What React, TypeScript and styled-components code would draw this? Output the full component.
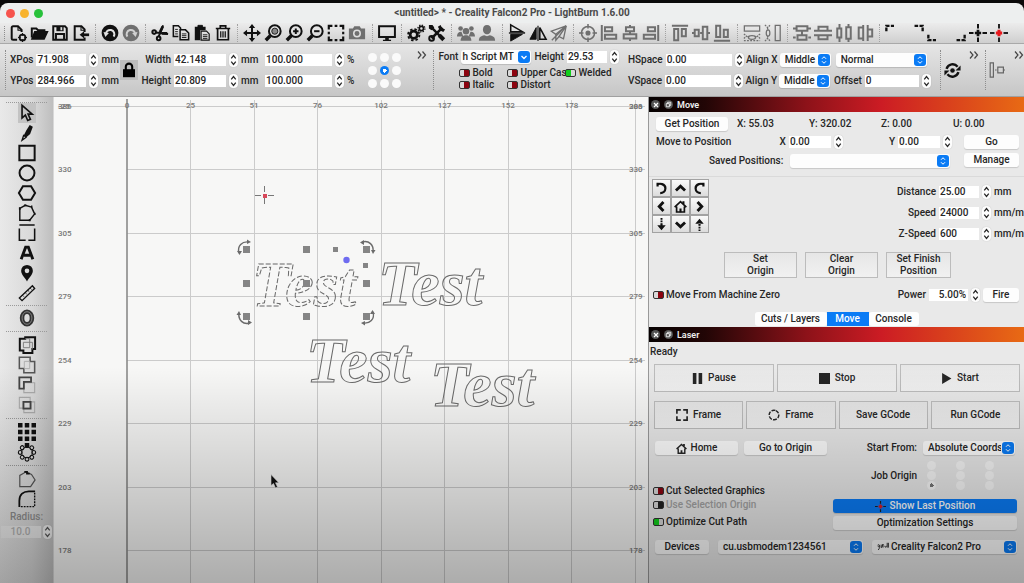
import React from "react";
import styled, { createGlobalStyle, css } from "styled-components";

const Global = createGlobalStyle`
  * { box-sizing: border-box; }
  html, body, #root { height: 100%; }
  body { margin: 0; background: #000; overflow: hidden; }
  body, button, input, select {
    font-family: Roboto, "Liberation Sans", sans-serif;
    font-size: 10px;
    font-weight: 500;
    line-height: 12px;
    color: #262626;
  }
  button, input, select { margin: 0; padding: 0; border: 0; }
`;

/* ---------- window frame ---------- */

const Window = styled.div`
  height: 100vh;
  padding-top: 3px;
  display: flex;
  flex-direction: column;
  background: #0a0a0a;
`;

const TitleBar = styled.header`
  display: grid;
  grid-template-columns: 1fr auto 1fr;
  align-items: center;
  height: 20px;
  flex: none;
  padding: 0 6px;
  background: #edefef;
  border-radius: 8px 8px 0 0;
`;

const Lights = styled.div`
  display: flex;
  gap: 5px;
`;

const Light = styled.span<{ $color: string }>`
  width: 9px;
  height: 9px;
  border-radius: 50%;
  background: ${(p) => p.$color};
`;

const Title = styled.h1`
  margin: 0;
  font-size: 10px;
  font-weight: 700;
  line-height: 12px;
  color: #4a4a4a;
`;

const Shade = styled.div`
  position: absolute;
  left: 0;
  right: 0;
  bottom: 0;
  height: 37vh;
  pointer-events: none;
  background: linear-gradient(rgba(0, 0, 0, 0), rgba(0, 0, 0, 0.3));
`;

/* ---------- icons ---------- */

const icons: Record<string, React.ReactNode> = {
  newFile: (
    <g>
      <path d="M9 17.5H4.5A1.5 1.5 0 0 1 3 16V4a1.5 1.5 0 0 1 1.500-1.500H10l4 4V9" />
      <path d="M10 3v4h4" strokeWidth="1.200" />
      <circle cx="15" cy="15" r="3.300" strokeWidth="2" />
      <path d="M15 10v3M15 17v3M10 15h3M17 15h3" strokeWidth="1.200" />
    </g>
  ),
  open: (
    <g>
      <path d="M2 15V5h5l2 2h7v2" />
      <path d="M2.500 16.500 5.500 9H19l-3.500 7.500z" fill="currentColor" />
    </g>
  ),
  save: (
    <g>
      <path d="M2.500 2.500h13l2 2v13h-15z" />
      <path d="M6 2.500h8v5.500H6z" fill="currentColor" stroke="none" />
      <path d="M10.500 3.500h2v3.500h-2z" fill="#ddd" stroke="none" />
      <path d="M5.500 17v-6h9v6" />
    </g>
  ),
  exportFile: (
    <g>
      <path d="M14 15v2.500H3v-15h7.500L14 6v3" />
      <path d="M10 3v4h4" strokeWidth="1.200" />
      <path d="M19 12h-6" strokeWidth="3" />
      <path d="M8.500 12l5-4v8z" fill="currentColor" stroke="none" />
    </g>
  ),
  undo: (
    <g>
      <circle cx="10" cy="10" r="9.300" fill="currentColor" stroke="none" />
      <path d="M5.500 12a4.700 4.700 0 1 1 8.500 2" stroke="#e2e2e2" strokeWidth="2.200" />
      <path d="M2.800 9l6 1-4 4.500z" fill="#e2e2e2" stroke="none" />
    </g>
  ),
  redo: (
    <g>
      <circle cx="10" cy="10" r="9.300" fill="currentColor" stroke="none" />
      <path d="M14.500 12A4.700 4.700 0 1 0 6 14" stroke="#cfcfcf" strokeWidth="2.200" />
      <path d="M17.200 9l-6 1 4 4.500z" fill="#cfcfcf" stroke="none" />
    </g>
  ),
  cut: (
    <g>
      <circle cx="3.500" cy="9" r="2" />
      <circle cx="8.500" cy="16" r="2" />
      <path d="M5.500 9.500 19 11M8.500 14 13.500 1.500" />
      <path d="M10 9l3-6M12 10.500h6" strokeWidth="3" />
    </g>
  ),
  copy: (
    <g strokeWidth="1.700">
      <path d="M7 14H1.500V2H7l2.500 2.500V6" />
      <path d="M9 6.500h6l3.500 3.500v7.500H9z" />
      <path d="M3.500 6h3M3.500 8.500h3M3.500 11h3M11 11h5M11 13h5M11 15h5" strokeWidth="1" />
    </g>
  ),
  paste: (
    <g>
      <path d="M2 3h12v4H8v11H2z" fill="currentColor" stroke="none" />
      <path d="M5.500 1.500h5v3h-5z" fill="currentColor" strokeWidth="1" />
      <path d="M9 8h6l3 3v7H9z" strokeWidth="1.300" />
      <path d="M11 12h5M11 14h5M11 16h5" strokeWidth="1" />
    </g>
  ),
  trash: (
    <g strokeWidth="1.900">
      <path d="M2 5h16M7 5V2h6v3M4 5v12.500h12V5" />
      <path d="M7.500 8v7M10 8v7M12.500 8v7" strokeWidth="1.400" />
    </g>
  ),
  move: (
    <g>
      <path d="M10 3v14M3 10h14" />
      <path d="M10 0l3.500 4.500h-7zM10 20l3.500-4.500h-7zM0 10l4.500-3.500v7zM20 10l-4.500-3.500v7z" fill="currentColor" stroke="none" />
    </g>
  ),
  zoomPage: (
    <g>
      <circle cx="12" cy="8" r="6.500" />
      <circle cx="12" cy="8" r="3.400" fill="#888" strokeWidth="1" />
      <path d="M7 13l-5 5" strokeWidth="3.800" />
    </g>
  ),
  zoomIn: (
    <g>
      <circle cx="12" cy="8" r="6.500" />
      <path d="M12 5v6M9 8h6M7 13l-1 1" />
      <path d="M7 13l-5 5" strokeWidth="3.800" />
    </g>
  ),
  zoomOut: (
    <g>
      <circle cx="12" cy="8" r="6.500" />
      <path d="M9 8h6" />
      <path d="M7 13l-5 5" strokeWidth="3.800" />
    </g>
  ),
  marquee: <path d="M2 6V2h4M8.500 2h3M14 2h4v4M18 8.500v3M18 14v4h-4M11.500 18h-3M6 18H2v-4M2 11.500v-3" strokeWidth="2.400" />,
  camera: (
    <g>
      <path d="M1 5h4.500L7 2.500h6L14.500 5H19v12H1z" fill="currentColor" stroke="none" />
      <circle cx="10" cy="10.500" r="3.600" stroke="#ddd" strokeWidth="1.700" />
    </g>
  ),
  monitor: (
    <g>
      <path d="M1.200 2.500h17.600v12H1.200z" />
      <path d="M8 15h4v2.500h2.500V19h-9v-1.500H8z" fill="currentColor" stroke="none" />
    </g>
  ),
  gears: (
    <g>
      <circle cx="7.500" cy="12" r="4" strokeWidth="3" />
      <circle cx="7.500" cy="12" r="6.300" strokeWidth="2" strokeDasharray="2.700 2.248" />
      <circle cx="16" cy="5" r="2.300" strokeWidth="1.800" />
      <circle cx="16" cy="5" r="3.900" strokeWidth="1.400" strokeDasharray="1.500 1.563" />
    </g>
  ),
  tools: (
    <g>
      <path d="M4 16 16 4" strokeWidth="3" />
      <path d="M3 3l14 14" strokeWidth="2.600" />
      <path d="M12.500 12.500l5 5" strokeWidth="4.500" />
      <path d="M1 5V1h4l2 3-3 3zM14 1l1.500 3.500L19 6l-2 3-4-2-2-4z" fill="currentColor" stroke="none" />
      <circle cx="4" cy="16" r="2.600" />
    </g>
  ),
  users: (
    <g fill="currentColor" stroke="none">
      <circle cx="4" cy="5" r="2.600" />
      <circle cx="16" cy="5" r="2.600" />
      <circle cx="10" cy="8" r="3.600" />
      <path d="M0 14c0-4 2-5.500 5-5.500l2 5.500zM20 14c0-4-2-5.500-5-5.500L13 14zM4 18.500c0-4 3-6 6-6s6 2 6 6z" />
    </g>
  ),
  user: (
    <g fill="currentColor" stroke="none">
      <path d="M10 1c3 0 4.500 2 4.500 5S12.500 11.500 10 11.500 5.500 9 5.500 6 7 1 10 1z" />
      <path d="M1 18.500c0-4 2-5 6-6l3 1 3-1c4 1 6 2 6 6z" />
    </g>
  ),
  flipV: (
    <g>
      <path d="M3 1l13 7.500H3z" strokeWidth="1.700" />
      <path d="M3 19l13-7.500H3z" fill="currentColor" strokeWidth="1" />
      <path d="M1 10h18" strokeWidth="1.500" />
    </g>
  ),
  flipH: (
    <g>
      <path d="M8 4v13H1z" fill="currentColor" strokeWidth="1" />
      <path d="M12 4v13h7z" strokeWidth="1.700" />
      <path d="M10 2v17" strokeWidth="1.300" />
    </g>
  ),
  mirror: (
    <g strokeWidth="1.500">
      <path d="M18 2 1.500 8l5 3.500zM18 2l-3 14.500-5-2.500z" />
      <path d="M2 18 18 2M6.500 11.500V18l3.500-4" />
    </g>
  ),
  target: (
    <g strokeWidth="1.700">
      <circle cx="10" cy="10" r="7.300" />
      <circle cx="10" cy="10" r="2" fill="currentColor" />
      <path d="M10 0v5M10 15v5M0 10h5M15 10h5" />
    </g>
  ),
  alignL: <path d="M2 1v18M5.500 3.500h8v4.500h-8zM5.500 12h12.500v4.500H5.500z" />,
  alignC: <path d="M10 1v2M10 8v3M10 16v3M5.500 3.500h9V8h-9zM3 11.500h14V16H3z" />,
  alignR: <path d="M18 1v18M6.500 3.500h8v4.500h-8zM2 12h12.500v4.500H2z" />,
  alignT: <path d="M1 2h18M3.500 5.500h4.500V18H3.500zM12 5.500h4.500v8H12z" />,
  alignM: <path d="M0 10h2M9 10h3M18 10h2M3 6.500h4.500v7H3zM12 3h5v14h-5z" />,
  alignB: <path d="M1 18.500h18M3.500 2h4.500v12.500H3.500zM12 6.500h4.500v8H12z" />,
  sameW: (
    <g strokeWidth="1.400">
      <path d="M1.500 2h17v6h-17z" />
      <path d="M1 11l3 2.500L1 16M19 11l-3 2.500 3 2.500M5 14h2M13 14h2" strokeDasharray="2 1" />
      <ellipse cx="10" cy="15" rx="4" ry="2" />
      <path d="M1 18.500h18" strokeDasharray="2 1.500" />
    </g>
  ),
  sameH: (
    <g strokeWidth="1.400">
      <path d="M12.500 1.500H18v17h-5.500z" />
      <path d="M1 1l3 3 3-3M1 19l3-3 3 3M4 4v3M4 13v3" strokeDasharray="2 1" />
      <ellipse cx="4.500" cy="10" rx="2" ry="3.500" />
    </g>
  ),
  distV: <path d="M0 5h3M17 5h3M0 15h3M17 15h3M10 8v4M4 2.500h12v5H4zM5 12.500h10v5H5z" />,
  spaceV: <path d="M0 7.500h20M0 12.500h20M5 7V3h10v4M5 13v4h10v-4" />,
  distH: <path d="M5 0v4M5 16v4M15 0v3M15 17v3M2.500 5h4.500v10H2.500zM12.500 3.500h5v13h-5z" />,
  spaceH: <path d="M8 1v18M13 1v18M7 4H3v12h4M13 6h5v8h-5" />,
  cornerTL: <path d="M1.500 8V2H10" strokeDasharray="4 1.500" strokeWidth="2.600" />,
  cornerTR: <path d="M18.500 8V2H9" strokeDasharray="4 1.500" strokeWidth="2.600" />,
  cornerBL: <path d="M1.500 12v6H10" strokeDasharray="4 1.500" strokeWidth="2.600" />,
  cornerBR: <path d="M18.500 12v6H9" strokeDasharray="4 1.500" strokeWidth="2.600" />,
  cross: (
    <g>
      <path d="M10 0v5M10 15v5M0 10h5M15 10h5" />
      <path d="M10 6.500v7M6.500 10h7" strokeWidth="3" />
    </g>
  ),
  crossRed: (
    <g>
      <path d="M10 0v5M10 15v5M0 10h5M15 10h5" stroke="#222" />
      <path d="M10 6.500v7M6.500 10h7" strokeWidth="3.400" stroke="#e8171b" />
    </g>
  ),
  select: <path d="M4.500 1.500v14l3.700-3.200 2.600 6 3-1.300-2.600-5.800h4.600z" strokeWidth="1.800" />,
  pencil: (
    <g>
      <path d="M9 7.500 13 1l3.500 2-3 8-4.500 4-3-1.500z" fill="currentColor" stroke="none" />
      <path d="M6.500 12 4.500 18l5-3.500" strokeWidth="1.500" />
    </g>
  ),
  rect: <path d="M1.500 2h17v16h-17z" strokeWidth="2.200" />,
  circle: <circle cx="10" cy="10" r="8.300" strokeWidth="2.200" />,
  hexagon: <path d="M5.500 2.500h9L19 10l-4.500 7.500h-9L1 10z" />,
  polygon: (
    <g strokeWidth="1.600">
      <path d="M2 18V5l6-3.500 7 2L18.500 11 13 18z" />
      <path d="M1 5h2M8 .5v2M14.500 3h1.500M18 11h1.500M12 18h2" strokeWidth="2.600" />
    </g>
  ),
  dashedBox: <path d="M1.500 1h17M1.500 5v13h7M11.500 18h7V5" strokeWidth="1.700" />,
  textA: <path d="M3.500 17 8.500 3.500h3l5 13.500M6.500 12.500h7" strokeWidth="3.200" />,
  pin: <path fillRule="evenodd" d="M10 1a6.500 6.500 0 0 1 6.500 6.500C16.500 12 12 15 10 19.500 8 15 3.500 12 3.500 7.500A6.500 6.500 0 0 1 10 1zm0 4a2.600 2.600 0 1 0 0 5.200A2.600 2.600 0 0 0 10 5z" fill="currentColor" stroke="none" />,
  ruler: (
    <g strokeWidth="1.500">
      <path d="M1.500 15.500 16 2l2.500 3L4.500 18.500z" />
      <path d="M5 12.500l1.500 1.500M8 9.500l1.500 1.500M11 7l1.500 1.500M13.500 4.500 15 6" strokeWidth="1" />
    </g>
  ),
  ring: (
    <g>
      <ellipse cx="10" cy="10" rx="5.500" ry="7" strokeWidth="5" stroke="#333" />
      <ellipse cx="10" cy="10" rx="5.500" ry="7" strokeWidth="1" stroke="#888" />
    </g>
  ),
  weld: (
    <g>
      <path d="M2 3h6V1.500h11v13h-3V19H6v-3H2z" />
      <path d="M8 3h5v10H6V7h10v8" strokeWidth="1" stroke="#777" />
    </g>
  ),
  union: (
    <g strokeWidth="1.700">
      <path d="M1.500 1.500h12V6h5v12.500h-12V14h-5z" stroke="#555" />
      <path d="M7 6h6v8H7z" stroke="#aaa" strokeWidth="1" />
    </g>
  ),
  subtract: (
    <g>
      <path d="M6.500 7.500H18.500v11h-12z" stroke="#aaa" strokeWidth="1.300" />
      <path d="M1.500 1.500h13v5h-8V14h-5z" stroke="#444" strokeWidth="2" />
    </g>
  ),
  intersect: (
    <g>
      <path d="M1.500 1.500h12v12h-12zM6.500 6.500h12v12h-12z" stroke="#aaa" strokeWidth="1.200" />
      <path d="M6 6.500h8V14H6z" stroke="#444" strokeWidth="2" />
    </g>
  ),
  gridArray: (
    <path d="M0 0h5v5H0zM7.500 0h5v5h-5zM15 0h5v5h-5zM0 7.500h5v5H0zM7.500 7.500h5v5h-5zM15 7.500h5v5h-5zM0 15h5v5H0zM7.500 15h5v5h-5zM15 15h5v5h-5z" fill="currentColor" stroke="none" />
  ),
  radialArray: (
    <g strokeWidth="1.200">
      <circle cx="10" cy="3" r="1.900" fill="currentColor" />
      {[45, 90, 135, 180, 225, 270, 315].map((a) => (
        <circle key={a} cx="10" cy="3" r="2.100" transform={`rotate(${a} 10 10.500)`} />
      ))}
      <circle cx="10" cy="10.500" r="6" strokeWidth="1" />
      <path d="M7.500 0h5v5h-5z" fill="currentColor" stroke="none" />
    </g>
  ),
  tabs: (
    <g>
      <path d="M2 18.500V6l7-4 6 3 4 6-5 7.500z" strokeWidth="1.300" stroke="#555" />
      <path d="M7 1h4v2h2v2H9V3H7z" fill="currentColor" stroke="none" />
    </g>
  ),
  fillet: (
    <g>
      <path d="M1.500 19V12C1.500 5 6 1.500 12 1.500h7" strokeWidth="2" />
      <path d="M18.500 3v15.500H2" strokeWidth="1.500" strokeDasharray="2 1.200" />
    </g>
  ),
  lock: (
    <g>
      <path d="M2.500 9h15v10h-15z" fill="currentColor" stroke="none" />
      <path d="M6 10V6a4 4 0 0 1 8 0v4" strokeWidth="2.600" />
    </g>
  ),
  refresh: (
    <g>
      <path d="M3 8a7.500 7.500 0 0 1 13-2.500M17 12a7.500 7.500 0 0 1-13 2.500" strokeWidth="2.800" />
      <path d="M19.500 4v6h-6zM.5 16v-6h6z" fill="currentColor" stroke="none" />
      <circle cx="10" cy="10" r="2.700" fill="currentColor" stroke="none" />
    </g>
  ),
  attach: (
    <g strokeWidth="1.500" stroke="#666">
      <path d="M1.500 1h4v18h-4zM11 6.500h7v7h-7z" />
      <path d="M7.500 10h2M18 10h2" />
    </g>
  ),
  turnL: <path d="M3 4.500C7 1 16 3 16 9.500c0 5-4 7.500-8 7.500M4 1v6" strokeWidth="3.400" />,
  turnR: <path d="M17 4.500C13 1 4 3 4 9.500c0 5 4 7.500 8 7.500M16 1v6" strokeWidth="3.400" />,
  up: <path d="M3 13l7-6.500 7 6.500" strokeWidth="4.400" />,
  down: <path d="M3 7l7 6.500L17 7" strokeWidth="4.400" />,
  left: <path d="M13 3l-6.500 7 6.500 7" strokeWidth="4.400" />,
  right: <path d="M7 3l6.500 7L7 17" strokeWidth="4.400" />,
  home: (
    <g>
      <path d="M1 11 10 2.500 19 11M4 10v8.500h12V10" strokeWidth="2.600" />
      <path d="M14.500 2v4M10 19v-6" strokeWidth="3.200" />
    </g>
  ),
  zDown: (
    <g>
      <path d="M10 0v10" strokeWidth="3" strokeDasharray="2.500 1.500" />
      <path d="M3.500 11h13L10 19zM8.500 9h3v3h-3z" fill="currentColor" stroke="none" />
    </g>
  ),
  zUp: (
    <g>
      <path d="M10 20V10" strokeWidth="3" strokeDasharray="2.500 1.500" />
      <path d="M3.500 9h13L10 1zM8.500 8h3v3h-3z" fill="currentColor" stroke="none" />
    </g>
  ),
  pause: <path d="M1.500 0H8v20H1.500zM12 0h6.500v20H12z" fill="currentColor" stroke="none" />,
  stop: <path d="M0 0h20v20H0z" fill="currentColor" stroke="none" />,
  play: <path d="M2 0l17 10L2 20z" fill="currentColor" stroke="none" />,
  frameSq: <path d="M1.500 8V1.500H8M12 1.500h6.500V8M18.500 12v6.500H12M8 18.500H1.500V12" strokeWidth="2.800" />,
  frameO: <circle cx="10" cy="10" r="8" strokeWidth="2.400" strokeDasharray="6.300 2.078" transform="rotate(-68 10 10)" />,
  chevrons: <path d="M2 3l6 7-6 7M11 3l6 7-6 7" strokeWidth="2.400" />,
  updown: <path d="M6 7.500 10 3.500l4 4M6 12.500l4 4 4-4" strokeWidth="2" />,
  dropdown: <path d="M5 8l5 5 5-5" strokeWidth="2.600" />,
  close: <path d="M5 5l10 10M15 5 5 15" strokeWidth="3" />,
  float: <path d="M5 8h7v7H5zM8 8V5h7v7h-3" strokeWidth="1.800" />,
  scribble: <path d="M1 7c2-2 4 0 3 2s-3 0-1-1 2 4-1 7M7 6v5c2 0 2-4 3-6M10 5v6M13 8c0 3 2 3 3 0M17 3v8M19 3v8" strokeWidth="1.600" />,
  stepUp: <path d="M5 14l5-6 5 6" strokeWidth="2.800" />,
  stepDown: <path d="M5 6l5 6 5-6" strokeWidth="2.800" />,
};

const Glyph = styled.svg<{ $size: number }>`
  display: block;
  flex: none;
  width: ${(p) => p.$size}px;
  height: ${(p) => p.$size}px;
  fill: none;
  stroke: currentColor;
  stroke-width: 2.2px;
  overflow: visible;
`;

const Icon = ({ name, size = 18 }: { name: string; size?: number }) => (
  <Glyph viewBox="0 0 20 20" $size={size} aria-hidden="true">
    {icons[name]}
  </Glyph>
);

/* ---------- main toolbar ---------- */

const Toolbar = styled.div`
  display: flex;
  align-items: center;
  flex: none;
  height: 21px;
  padding: 0 14px 0 4px;
  background: linear-gradient(#ececec, #cfcfcf);
  border-bottom: 1px solid #a9a9a9;
  overflow: hidden;
`;

const Handle = styled.span<{ $tall?: boolean }>`
  flex: none;
  width: 3px;
  height: ${(p) => (p.$tall ? "40px" : "15px")};
  border-left: 1px dotted #8d8d8d;
`;

const Separator = styled.span`
  flex: 1 0 8px;
  max-width: 10px;
  height: 18px;
  display: flex;
  justify-content: center;
  &::before {
    content: "";
    border-left: 1px dotted #a2a2a2;
  }
`;

const ToolButton = styled.button<{ $dim?: boolean; $active?: boolean }>`
  display: flex;
  align-items: center;
  justify-content: center;
  flex: none;
  width: 21px;
  height: 20px;
  background: ${(p) => (p.$active ? "#c3c3c3" : "none")};
  color: ${(p) => (p.$dim ? "#6f6f6f" : "#111")};
`;

const toolGroups: { items: string[]; dim?: string[] }[] = [
  { items: ["newFile", "open", "save", "exportFile"] },
  { items: ["undo", "redo"], dim: ["redo"] },
  { items: ["cut", "copy", "paste", "trash"] },
  { items: ["move", "zoomPage", "zoomIn", "zoomOut", "marquee", "camera"], dim: ["camera"] },
  { items: ["monitor"] },
  { items: ["gears", "tools"] },
  { items: ["users", "user"], dim: ["users", "user"] },
  { items: ["flipV", "flipH", "mirror"], dim: ["mirror"] },
  { items: ["target", "alignL", "alignC", "alignR"], dim: ["target", "alignL", "alignC", "alignR"] },
  { items: ["alignT", "alignM", "alignB"], dim: ["alignT", "alignM", "alignB"] },
  { items: ["sameW", "sameH"], dim: ["sameW", "sameH"] },
  { items: ["distV", "spaceV", "distH", "spaceH"], dim: ["distV", "spaceV", "distH", "spaceH"] },
  { items: ["cornerTL", "cornerTR", "cornerBL", "cornerBR", "cross", "crossRed"] },
];

/* ---------- form parts ---------- */

const Field = styled.input<{ $w: number; $right?: boolean }>`
  width: ${(p) => p.$w}px;
  height: 12px;
  flex: none;
  padding: 0 2px 0 1px;
  background: #fff;
  text-align: ${(p) => (p.$right ? "right" : "left")};
  &:disabled {
    background: #f4f4f4;
    color: #a0a0a0;
    text-align: center;
  }
`;

const StepperBox = styled.span`
  display: flex;
  flex-direction: column;
  flex: none;
  width: 9px;
  height: 14px;
  border-radius: 4px;
  background: #fdfdfd;
  box-shadow: 0 0 1px rgba(0, 0, 0, 0.25);
`;

const StepButton = styled.button`
  display: flex;
  justify-content: center;
  align-items: center;
  width: 9px;
  height: 7px;
  background: none;
`;

const Stepper = ({ label }: { label: string }) => (
  <StepperBox>
    <StepButton aria-label={`Increase ${label}`}><Icon name="stepUp" size={9} /></StepButton>
    <StepButton aria-label={`Decrease ${label}`}><Icon name="stepDown" size={9} /></StepButton>
  </StepperBox>
);

const SpinLabel = styled.label`
  display: flex;
  align-items: center;
  justify-content: flex-end;
  gap: 3px;
  white-space: nowrap;
`;

const Unit = styled.span<{ $w?: number }>`
  width: ${(p) => (p.$w ? `${p.$w}px` : "auto")};
`;

type SpinProps = { label?: string; aria?: string; value: string; w: number; unit?: string; unitW?: number; right?: boolean };

const Spin = ({ label, aria, value, w, unit, unitW, right }: SpinProps) => (
  <SpinLabel>
    {label}
    <Field $w={w} $right={right} defaultValue={value} aria-label={label ?? aria} />
    <Stepper label={label ?? aria ?? ""} />
    {unit && <Unit $w={unitW}>{unit}</Unit>}
  </SpinLabel>
);

const SelectWrap = styled.span<{ $w?: number }>`
  position: relative;
  display: inline-flex;
  flex: ${(p) => (p.$w ? "none" : "1")};
  width: ${(p) => (p.$w ? `${p.$w}px` : "auto")};
  height: 14px;
`;

const NativeSelect = styled.select<{ $pad: number }>`
  appearance: none;
  width: 100%;
  height: 14px;
  padding: 0 14px 0 ${(p) => p.$pad}px;
  border-radius: 3px;
  background: #fdfdfd;
  box-shadow: 0 1px 1px rgba(0, 0, 0, 0.15);
`;

const SelectArrow = styled.span`
  position: absolute;
  right: 1px;
  top: 1px;
  width: 12px;
  height: 12px;
  border-radius: 3px;
  display: flex;
  align-items: center;
  justify-content: center;
  color: #fff;
  background: #0a7bf5;
  pointer-events: none;
`;

type SelectProps = { value: string; w?: number; pad?: number; label: string; icon?: string };

const Select = ({ value, w, pad = 5, label, icon = "updown" }: SelectProps) => (
  <SelectWrap $w={w}>
    <NativeSelect $pad={pad} aria-label={label} defaultValue={value}>
      <option>{value}</option>
    </NativeSelect>
    <SelectArrow><Icon name={icon} size={10} /></SelectArrow>
  </SelectWrap>
);

const Switch = styled.input<{ $off?: string }>`
  appearance: none;
  flex: none;
  width: 11px;
  height: 8px;
  border: 1px solid #333;
  border-radius: 2px;
  background: linear-gradient(90deg, #d9d9d9 45%, ${(p) => p.$off ?? "#8c0410"} 45%);
  &:checked {
    background: linear-gradient(90deg, #12cf1c 55%, #d9d9d9 55%);
  }
`;

const SwitchLabel = styled.label<{ $muted?: boolean }>`
  display: flex;
  align-items: center;
  gap: 2px;
  height: 12px;
  white-space: nowrap;
  ${(p) => p.$muted && css`color: #a4a4a4;`}
`;

const Dots = styled.div<{ $gx: number; $gy: number }>`
  display: grid;
  grid-template-columns: repeat(3, 9px);
  grid-auto-rows: 9px;
  column-gap: ${(p) => p.$gx}px;
  row-gap: ${(p) => p.$gy}px;
`;

const Dot = styled.input<{ $faded?: boolean }>`
  appearance: none;
  width: 9px;
  height: 9px;
  margin: 0;
  border-radius: 50%;
  background: ${(p) => (p.$faded ? "#f6f6f6" : "#fafafa")};
  &:checked {
    ${(p) =>
      p.$faded
        ? css`background: radial-gradient(circle, #777 2px, #f6f6f6 2px);`
        : css`background: radial-gradient(circle, #fff 2px, #0a7bf5 2px);`}
  }
`;

const DotGrid = ({ name, picked, gx, gy, faded }: { name: string; picked: number; gx: number; gy: number; faded?: boolean }) => (
  <Dots $gx={gx} $gy={gy} role="radiogroup" aria-label={name}>
    {Array.from({ length: 9 }, (_, i) => (
      <Dot key={i} type="radio" name={name} aria-label={`${name} ${i + 1}`} defaultChecked={i === picked} $faded={faded} />
    ))}
  </Dots>
);

/* ---------- options bar ---------- */

const OptionsBar = styled.div`
  display: flex;
  align-items: center;
  flex: none;
  height: 53px;
  padding-left: 5px;
  background: linear-gradient(#e6e6e6, #c6c6c6);
  border-bottom: 1px solid #a0a0a0;
  overflow: hidden;
`;

const Stack = styled.div<{ $ml?: number }>`
  display: flex;
  flex-direction: column;
  flex: none;
  gap: 7px;
  margin-left: ${(p) => p.$ml ?? 0}px;
`;

const LockButton = styled.button`
  display: flex;
  align-items: center;
  justify-content: center;
  flex: none;
  width: 18px;
  height: 20px;
  margin-left: 3px;
  background: #bdbdbd;
  color: #000;
`;

const Spacer = styled.div<{ $w: number }>`
  flex: none;
  width: ${(p) => p.$w}px;
`;

const More = styled.button`
  align-self: flex-start;
  flex: none;
  width: 12px;
  height: 12px;
  margin-top: 5px;
  background: none;
  color: #444;
`;

const FontBlock = styled.div`
  display: flex;
  flex-direction: column;
  flex: none;
  gap: 3px;
  margin-left: 2px;
`;

const FontRow = styled.div`
  display: flex;
  align-items: center;
  gap: 3px;
`;

const FontSwitches = styled.div`
  display: grid;
  grid-template-columns: 48px 58px 1fr;
  padding-left: 21px;
`;

const PairRow = styled.div`
  display: flex;
  align-items: center;
  gap: 2px;
  height: 14px;
`;

const Cell = styled.span<{ $w: number }>`
  display: flex;
  justify-content: flex-end;
  flex: none;
  width: ${(p) => p.$w}px;
  white-space: nowrap;
`;

const PlainButton = styled.button`
  flex: none;
  background: none;
  color: #111;
`;

/* ---------- body ---------- */

const Body = styled.div`
  display: flex;
  flex: 1;
  min-height: 0;
`;

const Tools = styled.nav`
  display: flex;
  flex-direction: column;
  align-items: center;
  flex: none;
  width: 54px;
  padding-top: 5px;
  background: linear-gradient(90deg, #e9e9e9, #d9d9d9 60%, #bebebe);
  border-right: 1px solid #d8d8d8;
`;

const Rule = styled.span<{ $m: number }>`
  align-self: stretch;
  flex: none;
  margin: ${(p) => p.$m}px 6px;
  border-top: 1px dotted #9a9a9a;
`;

const SideButton = styled(ToolButton)`
  width: 18px;
`;

const RadiusLabel = styled.label`
  padding-top: 2px;
  color: #909090;
`;

const RadiusRow = styled.div`
  display: flex;
  align-items: center;
  gap: 2px;
  margin-top: 2px;
  opacity: 0.7;
`;

const CanvasArea = styled.main`
  flex: 1;
  min-width: 0;
  background: #f7f7f6;
  border-right: 1px solid #999;
`;

const Drawing = styled.svg`
  display: block;
  width: 100%;
  height: 100%;
`;

const RulerText = styled.text`
  font-family: Roboto, sans-serif;
  font-size: 8px;
  font-weight: 500;
  fill: #777;
`;

const Lettering = styled.text`
  font-family: "Brush Script MT", "Liberation Serif", serif;
  font-size: 64px;
  font-style: italic;
  font-weight: 700;
  fill: none;
  stroke: #6a6a6a;
  stroke-width: 1px;
`;

const columns = [0, 25, 51, 76, 102, 127, 152, 178];
const rows = [330, 305, 279, 254, 229, 203, 178];
const PITCH = 63.5;
const X0 = 73;
const Y0 = 9;

const Corner = ({ x, y, turn }: { x: number; y: number; turn: number }) => (
  <g transform={`translate(${x} ${y}) rotate(${turn})`} stroke="#6b6b6b" fill="none" strokeWidth="1.400">
    <path d="M-7 4C-9-3-4-8 3-7" />
    <path d="M1-9.500 5-7 1-5zM-9 2l2.500 4L-4 2z" fill="#6b6b6b" stroke="none" />
  </g>
);

const handles = [[192, 152], [252, 152], [312, 152], [192, 186], [252, 186], [312, 186], [192, 219], [252, 219], [312, 219]];

const Canvas = () => (
  <CanvasArea>
    <Drawing role="img" aria-label="Work area">
      <g stroke="#cbcbcb" strokeWidth="1">
        <path d={`M6 ${Y0}.5H591`} />
        {rows.map((_, i) => {
          const y = Math.floor(Y0 + (i + 1) * PITCH) + 0.5;
          return <path key={i} d={`M${X0} ${y}H591`} />;
        })}
        {columns.slice(1).map((_, i) => {
          const x = Math.floor(X0 + (i + 1) * PITCH) + 0.5;
          return <path key={i} d={`M${x} 3V1200`} />;
        })}
        <path d="M581.500 3V1200" />
      </g>
      <path d="M73 2V1200" stroke="#8a8a8a" strokeWidth="1.600" />
      {columns.map((c, i) => (
        <RulerText key={c} x={X0 + i * PITCH} y="11" textAnchor="middle">{c}</RulerText>
      ))}
      <RulerText x="4" y="12">386</RulerText>
      <RulerText x="4" y="12">-25</RulerText>
      <RulerText x="575" y="12">386</RulerText>
      <RulerText x="575" y="12">203</RulerText>
      {rows.map((r, i) => (
        <React.Fragment key={r}>
          <RulerText x="4" y={Math.floor(Y0 + (i + 1) * PITCH) + 3}>{r}</RulerText>
          <RulerText x="575" y={Math.floor(Y0 + (i + 1) * PITCH) + 3}>{r}</RulerText>
        </React.Fragment>
      ))}

      <g stroke="#777" strokeWidth="1">
        <path d="M210.500 89v6M210.500 101v6M201 98.500h6M214 98.500h6" />
        <path d="M209 97h4v4h-4z" fill="#d8485a" stroke="none" />
      </g>

      <Lettering x="198" y="209" strokeDasharray="5 2">Test</Lettering>
      <Lettering x="324" y="208">Test</Lettering>
      <Lettering x="252" y="285">Test</Lettering>
      <Lettering x="376" y="309">Test</Lettering>

      {handles.map(([x, y]) => (
        <rect key={`${x}-${y}`} x={x - 3} y={y - 3} width="7" height="7" fill="#858585" />
      ))}
      <rect x="279" y="150" width="5" height="5" fill="#858585" />
      <rect x="309" y="166" width="5" height="5" fill="#858585" />
      <circle cx="292.500" cy="163" r="3.200" fill="#6f6cf0" />
      <Corner x={192} y={152} turn={0} />
      <Corner x={312} y={152} turn={90} />
      <Corner x={312} y={219} turn={180} />
      <Corner x={192} y={219} turn={270} />

      <path d="M217 377.500v11l2.500-2 2 4.500 2-1-2-4.200h3.300z" fill="#111" stroke="#eee" strokeWidth="0.600" />
    </Drawing>
  </CanvasArea>
);

/* ---------- right-hand dock ---------- */

const Dock = styled.aside`
  flex: none;
  width: 375px;
  background: #e9e9e9;
  overflow: hidden;
`;

const DockTitle = styled.h2`
  display: flex;
  align-items: center;
  gap: 4px;
  height: 15px;
  margin: 0;
  padding-left: 2px;
  font-size: 9px;
  font-weight: 600;
  line-height: 12px;
  color: #eee;
  background: linear-gradient(90deg, #050000, #220606 15%, #8d1219 42%, #cc1c24 62%, #e86a14);
`;

const DockButton = styled.button`
  display: flex;
  align-items: center;
  justify-content: center;
  width: 9px;
  height: 9px;
  border-radius: 50%;
  color: #fff;
  background: #555;
`;

const Push = styled.button<{ $w?: number; $primary?: boolean }>`
  display: inline-flex;
  align-items: center;
  justify-content: center;
  gap: 4px;
  flex: none;
  width: ${(p) => (p.$w ? `${p.$w}px` : "100%")};
  height: 14px;
  border-radius: 3px;
  background: ${(p) => (p.$primary ? "#0a7bf5" : "#fdfdfd")};
  color: ${(p) => (p.$primary ? "#fff" : "#262626")};
  box-shadow: 0 1px 1px rgba(0, 0, 0, 0.15);
  white-space: nowrap;
`;

const BevelButton = styled.button<{ $h: number }>`
  display: flex;
  align-items: center;
  justify-content: center;
  gap: 5px;
  height: ${(p) => p.$h}px;
  border: 1px solid #bcbcbc;
  background: linear-gradient(#e6e6e6, #f1f1f1);
`;

const MoveGrid = styled.div`
  display: grid;
  grid-template-columns: 72px 1fr 55px;
  row-gap: 3px;
  column-gap: 9px;
  align-items: center;
  padding: 5px 5px 8px 7px;
  border-bottom: 1px solid #dadada;
`;

const Readouts = styled.div`
  grid-column: 2 / -1;
  display: grid;
  grid-template-columns: repeat(4, 72px);
`;

const MoveTo = styled.div`
  grid-column: 1 / 3;
  display: flex;
  align-items: center;
  justify-content: space-between;
  height: 15px;
  padding-right: 3px;
`;

const XInput = styled.div`
  display: flex;
  flex: 1;
  justify-content: flex-end;
  gap: 46px;
`;

const WideLabel = styled.label`
  display: flex;
  align-items: center;
  gap: 7px;
  width: 241px;
`;

const SavedRow = styled.div`
  grid-column: 1 / 3;
  display: flex;
  justify-content: flex-end;
  padding: 2px 5px 0 0;
`;

const JogRow = styled.div`
  display: flex;
  justify-content: space-between;
  padding: 2px 0 0 3px;
`;

const JogGrid = styled.div`
  display: grid;
  grid-template-columns: repeat(3, 19px);
  grid-auto-rows: 18px;
`;

const JogButton = styled.button`
  display: flex;
  align-items: center;
  justify-content: center;
  border: 1px solid #a2a2a2;
  background: linear-gradient(#fafafa, #dcdcdc);
  color: #111;
`;

const SpeedStack = styled.div`
  display: flex;
  flex-direction: column;
  gap: 7px;
  padding-top: 6px;
`;

const OriginRow = styled.div`
  display: grid;
  grid-template-columns: 73px 73px 65px;
  gap: 8px;
  padding: 11px 0 0 75px;
`;

const PowerRow = styled.div`
  display: flex;
  align-items: center;
  justify-content: space-between;
  padding: 10px 5px 0 4px;
`;

const Inline = styled.div<{ $gap: number }>`
  display: flex;
  align-items: center;
  gap: ${(p) => p.$gap}px;
`;

const Tabs = styled.div`
  display: flex;
  justify-content: center;
  padding: 10px 0 1px;
`;

const Tab = styled.button<{ $active?: boolean; $w: number }>`
  width: ${(p) => p.$w}px;
  height: 14px;
  border-radius: ${(p) => (p.$active ? "0" : "3px")};
  background: ${(p) => (p.$active ? "#0a7bf5" : "#fdfdfd")};
  color: ${(p) => (p.$active ? "#fff" : "#262626")};
`;

const Status = styled.p`
  margin: 0;
  padding: 4px 0 0 1px;
`;

const ButtonRow = styled.div<{ $cols: number; $top: number }>`
  display: grid;
  grid-template-columns: repeat(${(p) => p.$cols}, 1fr);
  gap: 3px;
  padding: ${(p) => p.$top}px 4px 0 5px;
`;

const HomeRow = styled.div`
  display: flex;
  align-items: center;
  gap: 6px;
  padding: 12px 9px 0 6px;
`;

const PushRight = styled.label`
  display: flex;
  align-items: center;
  gap: 6px;
  margin-left: auto;
`;

const JobOriginRow = styled.div`
  display: flex;
  align-items: center;
  justify-content: flex-end;
  gap: 10px;
  padding: 6px 30px 0 0;
`;

const CutRow = styled.div`
  display: grid;
  grid-template-columns: 1fr 184px;
  padding: 0 7px 0 4px;
`;

const CutSwitches = styled.div`
  display: flex;
  flex-direction: column;
  margin-top: -5px;
  gap: 2px;
  & > :last-child { margin-top: 3px; }
`;

const CutButtons = styled.div`
  display: flex;
  flex-direction: column;
  gap: 3px;
  padding-top: 9px;
`;

const DeviceRow = styled.div`
  display: flex;
  align-items: center;
  justify-content: space-between;
  padding: 10px 7px 0 6px;
`;

const DeviceSelect = styled.div`
  position: relative;
  display: flex;
`;

const DeviceMark = styled.span`
  position: absolute;
  left: 5px;
  top: 1px;
  z-index: 1;
`;

const PanelHead = ({ title }: { title: string }) => (
  <DockTitle>
    <DockButton aria-label={`Close ${title}`}><Icon name="close" size={8} /></DockButton>
    <DockButton aria-label={`Float ${title}`}><Icon name="float" size={9} /></DockButton>
    {title}
  </DockTitle>
);

const jogs = ["turnL", "up", "turnR", "left", "home", "right", "zDown", "down", "zUp"];

const sideGroups = [
  ["select", "pencil", "rect", "circle", "hexagon", "polygon", "dashedBox", "textA", "pin", "ruler"],
  ["ring"],
  ["weld", "union", "subtract", "intersect"],
  ["gridArray", "radialArray"],
  ["tabs", "fillet"],
];

export default function App() {
  return (
    <>
      <Global />
      <Window>
        <TitleBar>
          <Lights>
            <Light $color="#f6544d" />
            <Light $color="#f8b32d" />
            <Light $color="#27c13a" />
          </Lights>
          <Title>&lt;untitled&gt; * - Creality Falcon2 Pro - LightBurn 1.6.00</Title>
        </TitleBar>

        <Toolbar>
          <Handle />
          {toolGroups.map((g, i) => (
            <React.Fragment key={i}>
              {i > 0 && <Separator />}
              {g.items.map((n) => (
                <ToolButton key={n} aria-label={n} $dim={g.dim?.includes(n)}>
                  <Icon name={n} />
                </ToolButton>
              ))}
            </React.Fragment>
          ))}
        </Toolbar>

        <OptionsBar>
          <Handle $tall />
          <Stack $ml={2}>
            <Spin label="XPos" value="71.908" w={50} unit="mm" unitW={16} />
            <Spin label="YPos" value="284.966" w={50} unit="mm" unitW={16} />
          </Stack>
          <LockButton aria-label="Lock aspect ratio"><Icon name="lock" size={16} /></LockButton>
          <Stack $ml={3}>
            <Spin label="Width" value="42.148" w={52} unit="mm" unitW={16} />
            <Spin label="Height" value="20.809" w={52} unit="mm" unitW={16} />
          </Stack>
          <Stack $ml={8}>
            <Spin aria="Width percent" value="100.000" w={67} unit="%" />
            <Spin aria="Height percent" value="100.000" w={67} unit="%" />
          </Stack>
          <Spacer $w={14} />
          <DotGrid name="Anchor" picked={4} gx={3} gy={4} />
          <Spacer $w={16} />
          <More aria-label="More position options"><Icon name="chevrons" size={10} /></More>
          <Spacer $w={4} />
          <Handle $tall />
          <FontBlock>
            <FontRow>
              Font
              <Select value="h Script MT" w={70} pad={1} label="Font" icon="dropdown" />
              <Spin label="Height" value="29.53" w={40} />
            </FontRow>
            <FontSwitches>
              <SwitchLabel><Switch type="checkbox" />Bold</SwitchLabel>
              <SwitchLabel><Switch type="checkbox" />Upper Case</SwitchLabel>
              <SwitchLabel><Switch type="checkbox" defaultChecked />Welded</SwitchLabel>
              <SwitchLabel><Switch type="checkbox" />Italic</SwitchLabel>
              <SwitchLabel><Switch type="checkbox" />Distort</SwitchLabel>
            </FontSwitches>
          </FontBlock>
          <Stack $ml={9}>
            <PairRow>
              <Spin label="HSpace" value="0.00" w={66} />
              <Cell $w={32}>Align X</Cell>
              <Select value="Middle" w={51} label="Align X" />
              <Spacer $w={1} />
              <Select value="Normal" w={91} label="Text mode" />
            </PairRow>
            <PairRow>
              <Spin label="VSpace" value="0.00" w={66} />
              <Cell $w={32}>Align Y</Cell>
              <Select value="Middle" w={51} label="Align Y" />
              <Spacer $w={0} />
              <Spin label="Offset" value="0" w={54} />
            </PairRow>
          </Stack>
          <Spacer $w={9} />
          <Handle $tall />
          <Spacer $w={1} />
          <PlainButton aria-label="Refresh"><Icon name="refresh" size={17} /></PlainButton>
          <Spacer $w={8} />
          <More aria-label="More text options"><Icon name="chevrons" size={10} /></More>
          <Spacer $w={4} />
          <Handle $tall />
          <Spacer $w={1} />
          <PlainButton aria-label="Attach"><Icon name="attach" size={16} /></PlainButton>
          <Spacer $w={9} />
          <More aria-label="More arrange options"><Icon name="chevrons" size={10} /></More>
        </OptionsBar>

        <Body>
          <Tools>
            {sideGroups.map((g, i) => (
              <React.Fragment key={i}>
                <Rule $m={[0, 2, 3, 3, 3][i]} />
                {g.map((n) => (
                  <SideButton key={n} aria-label={n} $active={n === "select"}>
                    <Icon name={n} />
                  </SideButton>
                ))}
              </React.Fragment>
            ))}
            <RadiusLabel htmlFor="radius">Radius:</RadiusLabel>
            <RadiusRow>
              <Field id="radius" $w={40} defaultValue="10.0" disabled />
              <Stepper label="radius" />
            </RadiusRow>
          </Tools>

          <Canvas />

          <Dock>
            <PanelHead title="Move" />
            <MoveGrid>
              <Push>Get Position</Push>
              <Readouts>
                <span>X: 55.03</span>
                <span>Y: 320.02</span>
                <span>Z: 0.00</span>
                <span>U: 0.00</span>
              </Readouts>
              <MoveTo>
                Move to Position
                <XInput>
                  <Spin label="X" value="0.00" w={42} />
                  <Spin label="Y" value="0.00" w={42} />
                </XInput>
              </MoveTo>
              <Push>Go</Push>
              <SavedRow>
                <WideLabel>
                  Saved Positions:
                  <Select value="" label="Saved Positions" />
                </WideLabel>
              </SavedRow>
              <Push>Manage</Push>
            </MoveGrid>

            <JogRow>
              <JogGrid>
                {jogs.map((j) => (
                  <JogButton key={j} aria-label={j}><Icon name={j} size={13} /></JogButton>
                ))}
              </JogGrid>
              <SpeedStack>
                <Spin label="Distance" value="25.00" w={40} unit="mm" unitW={30} />
                <Spin label="Speed" value="24000" w={40} unit="mm/m" unitW={30} />
                <Spin label="Z-Speed" value="600" w={40} unit="mm/m" unitW={30} />
              </SpeedStack>
            </JogRow>

            <OriginRow>
              <BevelButton $h={26}>Set<br />Origin</BevelButton>
              <BevelButton $h={26}>Clear<br />Origin</BevelButton>
              <BevelButton $h={26}>Set Finish<br />Position</BevelButton>
            </OriginRow>

            <PowerRow>
              <SwitchLabel><Switch type="checkbox" />Move From Machine Zero</SwitchLabel>
              <Inline $gap={3}>
                <Spin label="Power" value="5.00%" w={39} right />
                <Push $w={36}>Fire</Push>
              </Inline>
            </PowerRow>

            <Tabs role="tablist">
              <Tab role="tab" $w={72}>Cuts / Layers</Tab>
              <Tab role="tab" $w={42} $active aria-selected="true">Move</Tab>
              <Tab role="tab" $w={50}>Console</Tab>
            </Tabs>

            <PanelHead title="Laser" />
            <Status>Ready</Status>
            <ButtonRow $cols={3} $top={6}>
              <BevelButton $h={28}><Icon name="pause" size={11} />Pause</BevelButton>
              <BevelButton $h={28}><Icon name="stop" size={11} />Stop</BevelButton>
              <BevelButton $h={28}><Icon name="play" size={11} />Start</BevelButton>
            </ButtonRow>
            <ButtonRow $cols={4} $top={9}>
              <BevelButton $h={28}><Icon name="frameSq" size={12} />Frame</BevelButton>
              <BevelButton $h={28}><Icon name="frameO" size={12} />Frame</BevelButton>
              <BevelButton $h={28}>Save GCode</BevelButton>
              <BevelButton $h={28}>Run GCode</BevelButton>
            </ButtonRow>

            <HomeRow>
              <Push $w={83}><Icon name="home" size={11} />Home</Push>
              <Push $w={83}>Go to Origin</Push>
              <PushRight>
                Start From:
                <Select value="Absolute Coords" w={92} label="Start From" />
              </PushRight>
            </HomeRow>

            <JobOriginRow>
              Job Origin
              <DotGrid name="Job Origin" picked={6} gx={20} gy={1} faded />
            </JobOriginRow>

            <CutRow>
              <CutSwitches>
                <SwitchLabel><Switch type="checkbox" />Cut Selected Graphics</SwitchLabel>
                <SwitchLabel $muted><Switch type="checkbox" $off="#222" disabled />Use Selection Origin</SwitchLabel>
                <SwitchLabel><Switch type="checkbox" defaultChecked />Optimize Cut Path</SwitchLabel>
              </CutSwitches>
              <CutButtons>
                <Push $primary><Icon name="crossRed" size={11} />Show Last Position</Push>
                <Push>Optimization Settings</Push>
              </CutButtons>
            </CutRow>

            <DeviceRow>
              <Push $w={54}>Devices</Push>
              <Select value="cu.usbmodem1234561" w={145} label="Port" />
              <DeviceSelect>
                <DeviceMark><Icon name="scribble" size={12} /></DeviceMark>
                <Select value="Creality Falcon2 Pro" w={145} pad={19} label="Device" />
              </DeviceSelect>
            </DeviceRow>
          </Dock>
        </Body>
      </Window>
      <Shade />
    </>
  );
}
